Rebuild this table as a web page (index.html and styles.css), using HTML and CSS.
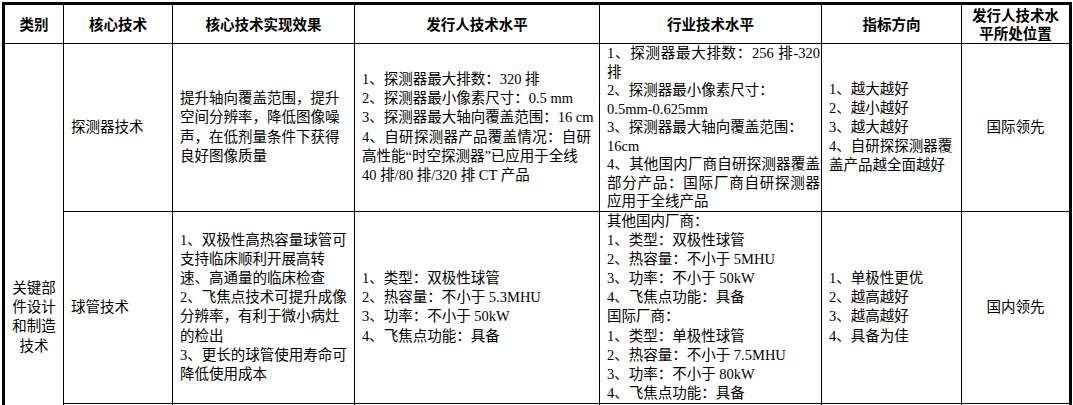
FILE: index.html
```html
<!DOCTYPE html>
<html lang="zh-CN">
<head>
<meta charset="utf-8">
<title>核心技术对比</title>
<link rel="stylesheet" href="styles.css">
</head>
<body>
<table class="spec">
  <colgroup>
    <col class="c-cat">
    <col class="c-tech">
    <col class="c-effect">
    <col class="c-issuer">
    <col class="c-industry">
    <col class="c-dir">
    <col class="c-pos">
  </colgroup>
  <thead>
    <tr class="r-head">
      <th>类别</th>
      <th>核心技术</th>
      <th>核心技术实现效果</th>
      <th>发行人技术水平</th>
      <th>行业技术水平</th>
      <th>指标方向</th>
      <th class="last">发行人技术水平所处位置</th>
    </tr>
  </thead>
  <tbody>
    <tr class="r-det">
      <td class="cat" rowspan="3">关键部<br>件设计<br>和制造<br>技术</td>
      <td>探测器技术</td>
      <td>提升轴向覆盖范围，提升<br>空间分辨率，降低图像噪<br>声，在低剂量条件下获得<br>良好图像质量</td>
      <td class="issuer">1、探测器最大排数：320 排<br>2、探测器最小像素尺寸：0.5 mm<br>3、探测器最大轴向覆盖范围：16 cm<br><span class="jl">4、自研探测器产品覆盖情况：自研</span>高性能“时空探测器”已应用于全线<br>40 排/80 排/320 排 CT 产品</td>
      <td class="industry top tight"><span class="jl">1、探测器最大排数：256 排-320</span>排<br>2、探测器最小像素尺寸：<br>0.5mm-0.625mm<br>3、探测器最大轴向覆盖范围：<br>16cm<br><span class="jl">4、其他国内厂商自研探测器覆盖</span><span class="jl">部分产品：国际厂商自研探测器</span>应用于全线产品</td>
      <td>1、越大越好<br>2、越小越好<br>3、越大越好<br>4、自研探探测器覆<br>盖产品越全面越好</td>
      <td class="last center">国际领先</td>
    </tr>
    <tr class="r-tube">
      <td>球管技术</td>
      <td>1、双极性高热容量球管可<br>支持临床顺利开展高转<br>速、高通量的临床检查<br>2、飞焦点技术可提升成像<br>分辨率，有利于微小病灶<br>的检出<br>3、更长的球管使用寿命可<br>降低使用成本</td>
      <td class="issuer">1、类型：双极性球管<br>2、热容量：不小于 5.3MHU<br>3、功率：不小于 50kW<br>4、飞焦点功能：具备</td>
      <td class="industry top">其他国内厂商：<br>1、类型：双极性球管<br>2、热容量：不小于 5MHU<br>3、功率：不小于 50kW<br>4、飞焦点功能：具备<br>国际厂商：<br>1、类型：单极性球管<br>2、热容量：不小于 7.5MHU<br>3、功率：不小于 80kW<br>4、飞焦点功能：具备</td>
      <td>1、单极性更优<br>2、越高越好<br>3、越高越好<br>4、具备为佳</td>
      <td class="last center">国内领先</td>
    </tr>
    <tr class="r-next">
      <td></td>
      <td></td>
      <td></td>
      <td></td>
      <td></td>
      <td class="last"></td>
    </tr>
  </tbody>
</table>
</body>
</html>
```

FILE: styles.css
```css
html, body {
  margin: 0;
  padding: 0;
  background: #fff;
}

.spec {
  margin: 2px 0 0 2px;
  width: 1070px;
  table-layout: fixed;
  border-collapse: separate;
  border-spacing: 0;
  border: 3px solid #000;
  font-family: "Liberation Serif", "Noto Sans CJK SC", serif;
  font-size: 14.5px;
  line-height: 19.1px;
  color: #000;
}

.c-cat { width: 59px; }
.c-tech { width: 109px; }
.c-effect { width: 182px; }
.c-issuer { width: 245px; }
.c-industry { width: 222px; }
.c-dir { width: 140px; }
.c-pos { width: 107px; }

.spec th,
.spec td {
  padding: 0 7px;
  border-right: 1px solid #000;
  border-bottom: 1px solid #000;
  vertical-align: middle;
  text-align: left;
  white-space: nowrap;
  overflow: visible;
}

.spec th {
  font-family: "Noto Sans CJK SC", sans-serif;
  font-weight: 700;
  font-size: 14.5px;
  line-height: 18.3px;
  text-align: center;
  white-space: normal;
  padding: 0 8px;
}

.spec .last {
  border-right: none;
}

.r-head { height: 39px; }
.r-det { height: 168px; }
.r-tube { height: 191px; }
.r-next { height: 188px; }

.spec td.cat {
  text-align: center;
  padding: 0;
}

.spec td.issuer {
  padding-right: 8px;
}

.spec td.industry {
  padding-right: 1px;
}

.spec td.center {
  text-align: center;
}

.spec td.top {
  vertical-align: top;
}

.spec td.tight {
  line-height: 18.5px;
}

.jl {
  display: block;
  white-space: normal;
  text-align: justify;
  text-align-last: justify;
}
```
